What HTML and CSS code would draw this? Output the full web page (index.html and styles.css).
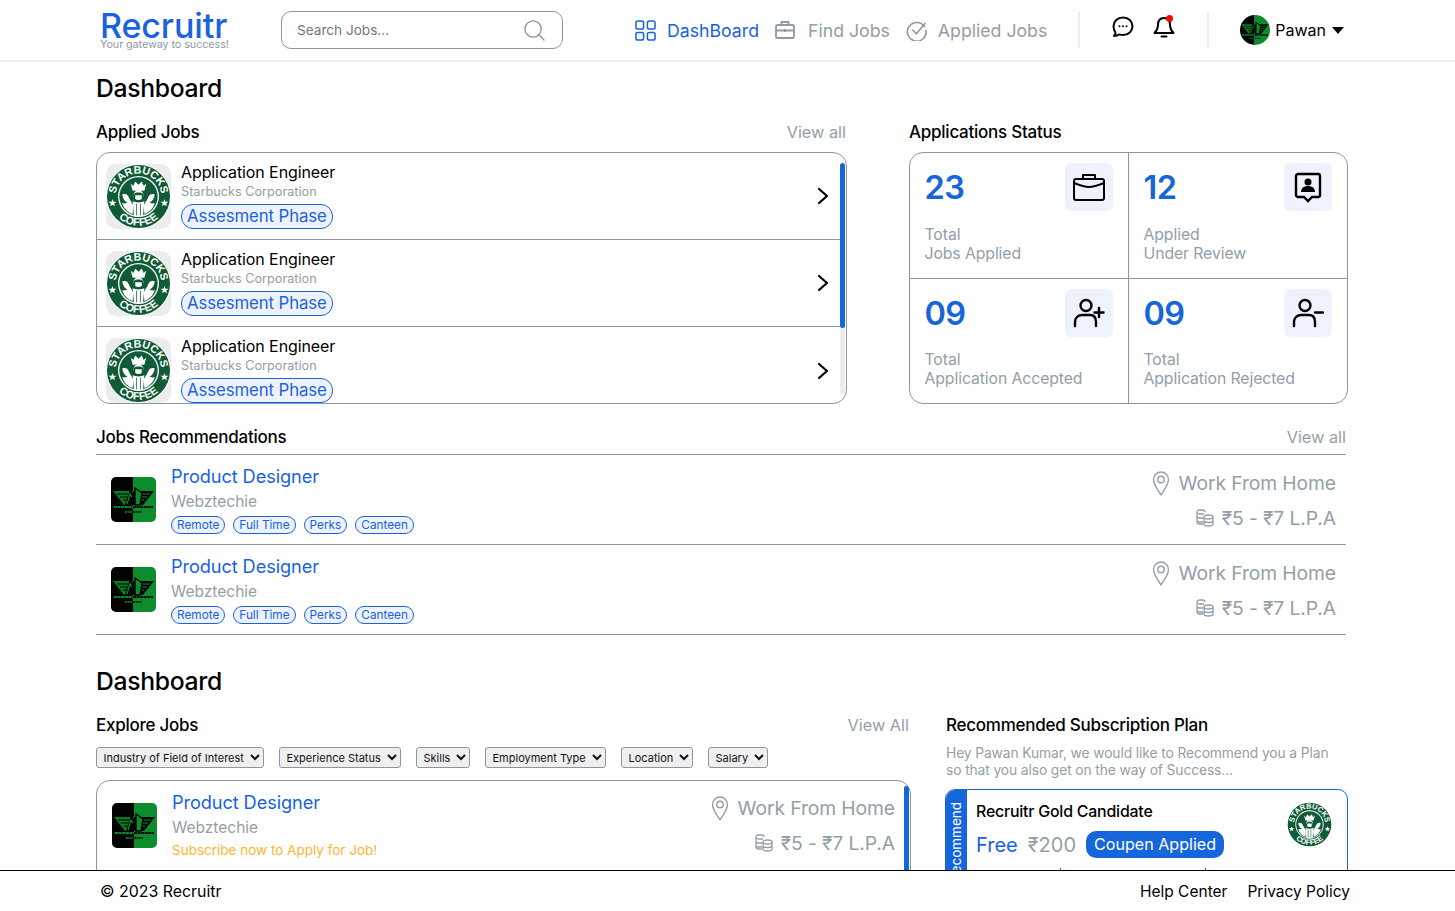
FILE: index.html
```html
<!DOCTYPE html>
<html lang="en">
<head>
<meta charset="utf-8">
<title>Recruitr Dashboard</title>
<link rel="stylesheet" href="styles.css">
</head>
<body>
<svg class="defs" aria-hidden="true">
  <defs>
    <path id="arcTop" d="M15.100 47 A35 35 0 0 1 84.900 47"/>
    <path id="arcBot" d="M18.200 81.800 A45 45 0 0 0 81.800 81.800"/>
    <symbol id="starbucks" viewBox="0 0 100 100">
      <circle cx="50" cy="50" r="50" fill="#fff"/>
      <circle cx="50" cy="50" r="48.500" fill="#0f5b36"/>
      <circle cx="50" cy="50" r="31.500" fill="#fff"/>
      <circle cx="50" cy="50" r="29.500" fill="#0f5b36"/>
      <text class="sb-text"><textPath href="#arcTop" startOffset="50%" text-anchor="middle">STARBUCKS</textPath></text>
      <text class="sb-text"><textPath href="#arcBot" startOffset="50%" text-anchor="middle">COFFEE</textPath></text>
      <polygon points="10,54 11.500,58 16,58 12.500,61 14,65 10,62.500 6,65 7.500,61 4,58 8.500,58" fill="#fff"/>
      <polygon points="90,54 91.500,58 96,58 92.500,61 94,65 90,62.500 86,65 87.500,61 84,58 88.500,58" fill="#fff"/>
      <path d="M25 47c5-2 8 0 10 4 2 5 5 8 7 13l-1 13c-8-3-14-9-16-17 3 1 6 1 8-1-4-1-7-5-8-12zM75 47c-5-2-8 0-10 4-2 5-5 8-7 13l1 13c8-3 14-9 16-17-3 1-6 1-8-1 4-1 7-5 8-12z" fill="#fff"/>
      <path d="M38 30l4 4 3-7 5 5 5-5 3 7 4-4-3 11H41z" fill="#fff"/>
      <circle cx="50" cy="48" r="7.500" fill="#fff"/>
      <path d="M43 47c0-4 14-4 14 0l2 9-4-3v-5H45v5l-4 3z" fill="#0f5b36"/>
      <path d="M41 57c5 3 13 3 18 0l-2 23H43z" fill="#fff"/>
      <path d="M47 61v18M53 61v18" stroke="#0f5b36" stroke-width="1.200"/>
    </symbol>
    <symbol id="webz" viewBox="0 0 45 45">
      <rect width="22" height="45" fill="#020402"/>
      <rect x="22" width="23" height="45" fill="#0c8c2c"/>
      <polygon points="2,14 22,14 22,28 13,28" fill="#0a7a26"/>
      <polygon points="43,14 22,14 22,28 32,28" fill="#020402"/>
      <path d="M6 17h11M9 20h9M12 23h7" stroke="#020402" stroke-width="1"/>
      <path d="M28 17h11M27 20h9M27 23h6" stroke="#0c8c2c" stroke-width="1"/>
      <path d="M14 28l5-16 3 4v12z" fill="#020402"/>
      <path d="M16 27l3-10 2 3" fill="none" stroke="#0c8c2c" stroke-width="1.200"/>
      <path d="M24 28V11l7 5-2 12z" fill="#0c8c2c" stroke="#020402" stroke-width="1.400"/>
      <path d="M3 30h19" stroke="#0c8c2c" stroke-width="2.200" stroke-dasharray="3 .6"/>
      <path d="M22 30h20" stroke="#020402" stroke-width="2.200" stroke-dasharray="3 .6"/>
      <path d="M14 35h8" stroke="#0c8c2c" stroke-width="1.400" stroke-dasharray="2 .6"/>
      <path d="M22 35h9" stroke="#020402" stroke-width="1.400" stroke-dasharray="2 .6"/>
    </symbol>
    <symbol id="chev" viewBox="0 0 12 18">
      <path d="M2 2l8 7-8 7" fill="none" stroke="#000" stroke-width="2.200" stroke-linecap="round" stroke-linejoin="round"/>
    </symbol>
    <symbol id="pin" viewBox="0 0 18 26">
      <path d="M9 25C6 20 1.500 15 1.500 9.500a7.500 7.500 0 0 1 15 0C16.500 15 12 20 9 25z" fill="none" stroke="#939ea8" stroke-width="1.400" stroke-linejoin="round"/>
      <circle cx="9" cy="9.500" r="3.200" fill="none" stroke="#939ea8" stroke-width="1.400"/>
    </symbol>
    <symbol id="coins" viewBox="0 0 18 18">
      <g fill="none" stroke="#939ea8" stroke-width="1.300">
        <path d="M8 5H3.500C2 5 1 4 1 3s1-2 2.500-2h3C8 1 9 2 9 3M1 3v9.500C1 14 2 15 3.500 15H7M1 7c0 1 1 2 2.500 2H7M1 11c0 1 1 2 2.500 2H7"/>
        <ellipse cx="12.500" cy="8" rx="4.500" ry="2"/>
        <path d="M8 8v7c0 1.200 2 2 4.500 2s4.500-.8 4.500-2V8M8 11.500c0 1.200 2 2 4.500 2s4.500-.8 4.500-2"/>
      </g>
    </symbol>
  </defs>
</svg>

<header class="topbar">
  <div class="brand">
    <span class="brand-name">Recruitr</span>
    <span class="brand-tag">Your gateway to success!</span>
  </div>
  <label class="search">
    <input class="search-input" type="text" placeholder="Search Jobs...">
    <svg class="search-icon" viewBox="0 0 22 22"><circle cx="9.500" cy="9.500" r="8.500" fill="none" stroke="#8a97a3" stroke-width="1.400"/><path d="M15.500 15.500l5.500 5.500" stroke="#8a97a3" stroke-width="1.400" stroke-linecap="round"/></svg>
  </label>
  <nav class="nav">
    <a class="nav-item active">
      <svg class="nav-icon" viewBox="0 0 22 22"><g fill="none" stroke="#1a62e0" stroke-width="1.600"><rect x="1" y="1" width="8" height="8.500" rx="2"/><rect x="13" y="1" width="8" height="8.500" rx="2"/><rect x="1" y="13" width="8" height="8" rx="2"/><rect x="13" y="13" width="8" height="8" rx="2"/></g></svg>
      DashBoard
    </a>
    <a class="nav-item">
      <svg class="nav-icon small" viewBox="0 0 20 20"><g fill="none" stroke="#8f9aa4" stroke-width="1.800"><rect x="1" y="5" width="18" height="13" rx="1.500"/><path d="M6.500 5V2h7v3M1 10.500h18M10 9v3"/></g></svg>
      Find Jobs
    </a>
    <a class="nav-item">
      <svg class="nav-icon" viewBox="0 0 22 22"><path d="M19.500 7A9.800 9.800 0 1 0 21 11" fill="none" stroke="#8f9aa4" stroke-width="1.700" stroke-linecap="round"/><path d="M7 10.500l4 4 9-11" fill="none" stroke="#8f9aa4" stroke-width="1.700" stroke-linecap="round" stroke-linejoin="round"/></svg>
      Applied Jobs
    </a>
  </nav>
  <div class="bar-tools">
    <svg class="tool" viewBox="0 0 22 22"><path d="M11 1.500c5.500 0 9.500 3.800 9.500 8.800S16.500 19 11 19c-1.300 0-2.500-.2-3.600-.6-1.500 1-3.300 1.600-5.400 1.600 1-1.200 1.500-2.300 1.500-3.400-1.300-1.600-2-3.500-2-6.300 0-5 4-8.800 9.500-8.800z" fill="none" stroke="#000" stroke-width="2" stroke-linejoin="round"/><circle cx="7.500" cy="10.300" r="1" fill="#000"/><circle cx="11" cy="10.300" r="1" fill="#000"/><circle cx="14.500" cy="10.300" r="1" fill="#000"/></svg>
    <svg class="tool" viewBox="0 0 22 24"><path d="M11 3C7 3 5 6 5 10c0 4-1.500 6-3.500 8h19C18.500 16 17 14 17 10c0-4-2-7-6-7z" fill="none" stroke="#000" stroke-width="2" stroke-linejoin="round"/><path d="M8.500 21.500h5" stroke="#000" stroke-width="2" stroke-linecap="round"/><circle cx="16.500" cy="3.500" r="3.500" fill="#f00a0a"/></svg>
  </div>
  <div class="user">
    <svg class="avatar" aria-hidden="true"><use href="#webz"/></svg>
    <span class="user-name">Pawan</span>
    <span class="caret"></span>
  </div>
</header>

<main class="page">
  <h1 class="page-title">Dashboard</h1>
  <div class="grid-top">
    <section>
      <div class="sec-head"><h2 class="sec-title">Applied Jobs</h2><a class="view-all">View all</a></div>
      <div class="card applied">
        <div class="applied-list">
          <div class="app-row">
            <div class="app-logo"><svg class="sb"><use href="#starbucks"/></svg></div>
            <div class="app-text">
              <div class="app-title">Application Engineer</div>
              <div class="app-sub">Starbucks Corporation</div>
              <span class="phase">Assesment Phase</span>
            </div>
            <svg class="chev"><use href="#chev"/></svg>
          </div>
          <div class="app-row">
            <div class="app-logo"><svg class="sb"><use href="#starbucks"/></svg></div>
            <div class="app-text">
              <div class="app-title">Application Engineer</div>
              <div class="app-sub">Starbucks Corporation</div>
              <span class="phase">Assesment Phase</span>
            </div>
            <svg class="chev"><use href="#chev"/></svg>
          </div>
          <div class="app-row last">
            <div class="app-logo"><svg class="sb"><use href="#starbucks"/></svg></div>
            <div class="app-text">
              <div class="app-title">Application Engineer</div>
              <div class="app-sub">Starbucks Corporation</div>
              <span class="phase">Assesment Phase</span>
            </div>
            <svg class="chev"><use href="#chev"/></svg>
          </div>
        </div>
        <div class="track"><div class="thumb"></div></div>
      </div>
    </section>
    <section>
      <div class="sec-head"><h2 class="sec-title">Applications Status</h2></div>
      <div class="card stats">
        <div class="stat">
          <div class="stat-top"><span class="stat-num">23</span>
            <span class="stat-icon"><svg class="stat-svg" viewBox="0 0 32 28"><g fill="none" stroke="#000" stroke-width="2" stroke-linejoin="round"><rect x="1" y="6" width="30" height="21" rx="2"/><path d="M10 6V2h12v4M1 10c5 2 10 4 15 4s10-2 15-4"/></g></svg></span></div>
          <div class="stat-label">Total<br>Jobs Applied</div>
        </div>
        <div class="stat right">
          <div class="stat-top"><span class="stat-num">12</span>
            <span class="stat-icon"><svg class="stat-svg" viewBox="0 0 32 32"><path d="M6 3h20c1 0 2 1 2 2v19c0 1-1 2-2 2h-6l-4 4-4-4H6c-1 0-2-1-2-2V5c0-1 1-2 2-2z" fill="none" stroke="#000" stroke-width="2.400"/><circle cx="16" cy="11" r="3.500" fill="#000"/><path d="M9 21c0-4 3-6 7-6s7 2 7 6z" fill="#000"/></svg></span></div>
          <div class="stat-label">Applied<br>Under Review</div>
        </div>
        <div class="stat bottom">
          <div class="stat-top"><span class="stat-num">09</span>
            <span class="stat-icon"><svg class="stat-svg" viewBox="0 0 32 30"><g fill="none" stroke="#000" stroke-width="2.400" stroke-linecap="round"><circle cx="13" cy="7.500" r="5.500"/><path d="M2 28v-4c0-4 3-7 7-7h8c4 0 6 3 6 7v4M26 10v9M21.500 14.500h9"/></g></svg></span></div>
          <div class="stat-label">Total<br>Application Accepted</div>
        </div>
        <div class="stat right bottom">
          <div class="stat-top"><span class="stat-num">09</span>
            <span class="stat-icon"><svg class="stat-svg" viewBox="0 0 32 30"><g fill="none" stroke="#000" stroke-width="2.400" stroke-linecap="round"><circle cx="13" cy="7.500" r="5.500"/><path d="M2 28v-4c0-4 3-7 7-7h8c4 0 6 3 6 7v4M23 14.500h8"/></g></svg></span></div>
          <div class="stat-label">Total<br>Application Rejected</div>
        </div>
      </div>
    </section>
  </div>

  <section class="recs">
    <div class="sec-head"><h2 class="sec-title">Jobs Recommendations</h2><a class="view-all flush">View all</a></div>
    <div class="rec-list">
      <article class="rec-row">
        <svg class="webz"><use href="#webz"/></svg>
        <div class="job-main">
          <div class="job-title">Product Designer</div>
          <div class="job-co">Webztechie</div>
          <div class="chips"><span class="chip">Remote</span><span class="chip">Full Time</span><span class="chip">Perks</span><span class="chip">Canteen</span></div>
        </div>
        <div class="job-side">
          <div class="side-line"><svg class="pin"><use href="#pin"/></svg>Work From Home</div>
          <div class="side-line"><svg class="coins"><use href="#coins"/></svg>₹5 - ₹7 L.P.A</div>
        </div>
      </article>
      <article class="rec-row">
        <svg class="webz"><use href="#webz"/></svg>
        <div class="job-main">
          <div class="job-title">Product Designer</div>
          <div class="job-co">Webztechie</div>
          <div class="chips"><span class="chip">Remote</span><span class="chip">Full Time</span><span class="chip">Perks</span><span class="chip">Canteen</span></div>
        </div>
        <div class="job-side">
          <div class="side-line"><svg class="pin"><use href="#pin"/></svg>Work From Home</div>
          <div class="side-line"><svg class="coins"><use href="#coins"/></svg>₹5 - ₹7 L.P.A</div>
        </div>
      </article>
    </div>
  </section>

  <h1 class="page-title second">Dashboard</h1>
  <div class="grid-bottom">
    <section>
      <div class="sec-head explore-head"><h2 class="sec-title">Explore Jobs</h2><a class="view-all">View All</a></div>
      <div class="filters">
        <select class="filter"><option>Industry of Field of Interest</option></select>
        <select class="filter"><option>Experience Status</option></select>
        <select class="filter"><option>Skills</option></select>
        <select class="filter"><option>Employment Type</option></select>
        <select class="filter"><option>Location</option></select>
        <select class="filter"><option>Salary</option></select>
      </div>
      <div class="card explore">
        <article class="explore-row">
          <svg class="webz"><use href="#webz"/></svg>
          <div class="job-main">
            <div class="job-title">Product Designer</div>
            <div class="job-co">Webztechie</div>
            <div class="subscribe">Subscribe now to Apply for Job!</div>
          </div>
          <div class="job-side">
            <div class="side-line"><svg class="pin"><use href="#pin"/></svg>Work From Home</div>
            <div class="side-line"><svg class="coins"><use href="#coins"/></svg>₹5 - ₹7 L.P.A</div>
          </div>
        </article>
        <div class="track explore-track"><div class="thumb full"></div></div>
      </div>
    </section>
    <section>
      <div class="sec-head"><h2 class="sec-title">Recommended Subscription Plan</h2></div>
      <p class="plan-intro">Hey Pawan Kumar, we would like to Recommend you a Plan<br>so that you also get on the way of Success...</p>
      <div class="plan">
        <div class="plan-band"><span class="plan-band-text">Recommend</span></div>
        <div class="plan-body">
          <div class="plan-top">
            <div>
              <div class="plan-name">Recruitr Gold Candidate</div>
              <div class="plan-price">
                <span class="price-free">Free</span>
                <span class="price-old">₹200</span>
                <span class="coupon">Coupen Applied</span>
              </div>
            </div>
            <svg class="plan-logo"><use href="#starbucks"/></svg>
          </div>
          <div class="plan-features">
            <div class="feature"></div>
            <div class="feature"></div>
            <div class="feature"></div>
          </div>
        </div>
      </div>
    </section>
  </div>
</main>

<footer class="footer">
  <span>© 2023 Recruitr</span>
  <div class="foot-links"><a>Help Center</a><a>Privacy Policy</a></div>
</footer>
</body>
</html>
```

FILE: styles.css
```css
* { box-sizing: border-box; }
html, body { margin: 0; height: 100%; }
body {
  height: 100vh;
  display: flex;
  flex-direction: column;
  overflow: hidden;
  background: #fff;
  color: #000;
  font-family: "Inter", "Noto Sans", sans-serif;
}
.defs { position: absolute; width: 0; height: 0; }
.sb-text { font: 700 16.500px "Liberation Sans", sans-serif; fill: #fff; }

/* header */
.topbar {
  height: 62px;
  flex: none;
  display: flex;
  align-items: center;
  border-bottom: 2px solid #ececec;
  padding: 0 100px;
}
.topbar > * { flex: none; }
.brand { width: 181px; display: flex; flex-direction: column; margin-top: 1px; }
.brand-name { font-size: 34px; line-height: 30px; font-weight: 500; color: #1a62e0; letter-spacing: -.1px; }
.brand-tag { font-size: 10.850px; line-height: 11px; margin-top: -2px; color: #8f9aa4; letter-spacing: -.1px; }
.search {
  width: 282px; height: 38px;
  display: flex; align-items: center;
  border: 1px solid #8a97a3; border-radius: 10px;
  padding: 0 17px 0 15px;
}
.search-input { flex: 1; min-width: 0; border: 0; outline: 0; padding: 0; font: 13.600px "Inter", sans-serif; color: #6d7882; }
.search-input::placeholder { color: #6d7882; opacity: 1; }
.search-icon { width: 21px; height: 21px; }
.nav { display: flex; align-items: center; margin-left: 72px; gap: 16px; }
.nav-item { display: flex; align-items: center; gap: 11px; font-size: 17.700px; color: #929da7; white-space: nowrap; }
.nav-item.active { color: #1a62e0; }
.nav-icon { width: 21px; height: 21px; }
.nav-icon.small { width: 20px; height: 20px; margin-right: 2px; }
.bar-tools {
  height: 36px; margin-left: 31px;
  display: flex; align-items: center; gap: 19px;
  padding: 0 32px;
  border-left: 2px solid #ececec; border-right: 2px solid #ececec;
}
.tool { width: 22px; height: 24px; margin-top: -6px; }
.user { display: flex; align-items: center; margin-left: 31px; }
.avatar { width: 30px; height: 30px; border-radius: 50%; }
.user-name { font-size: 16px; margin-left: 5px; }
.caret { width: 0; height: 0; margin-left: 6px; border: 6px solid transparent; border-bottom: 0; border-top: 7px solid #000; }

/* page */
.page { flex: 1; min-height: 0; overflow: hidden; padding: 11px 107px 0 96px; }
.page-title { margin: 0; font-size: 24.700px; line-height: 30px; font-weight: 500; letter-spacing: -.3px; }
.page-title.second { margin-top: 31px; }
.grid-top { display: grid; grid-template-columns: 751px 439px; column-gap: 62px; margin-top: 19px; margin-right: -1px; }
.grid-bottom { display: grid; grid-template-columns: 815px 402px; column-gap: 35px; margin-top: 19px; }
.sec-head { display: flex; justify-content: space-between; align-items: center; height: 20px; }
.sec-title { margin: 0; font-size: 17px; line-height: 20px; font-weight: 500; letter-spacing: -.25px; }
.view-all { font-size: 16.300px; color: #939ea8; padding-right: 1px; }
.view-all.flush { padding-right: 0; }
.card { border: 1px solid #8a97a3; border-radius: 14px; overflow: hidden; background: #fff; }

/* applied */
.applied { margin-top: 10px; height: 252px; display: flex; }
.applied-list { flex: 1; min-width: 0; }
.app-row { height: 87px; display: flex; padding: 9px 11px 0 9px; border-bottom: 1px solid #8a97a3; position: relative; }
.app-row.last { border-bottom: 0; }
.app-logo { width: 65px; height: 65px; flex: none; margin-top: 2px; background: #ececec; border-radius: 10px; display: flex; align-items: center; justify-content: center; }
.sb { width: 65px; height: 65px; }
.app-text { flex: 1; margin-left: 10px; display: flex; flex-direction: column; align-items: flex-start; }
.app-title { font-size: 16px; line-height: 20px; letter-spacing: -.1px; }
.app-sub { font-size: 12.700px; line-height: 16px; margin-top: 2px; color: #939ea8; }
.phase { height: 25px; margin-top: 4px; padding: 0 5px; border: 1px solid #1a62e0; border-radius: 12px; background: #eef2fd; color: #1a62e0; font-size: 16.800px; line-height: 23px; letter-spacing: -.1px; white-space: nowrap; }
.chev { width: 12px; height: 18px; align-self: center; margin-top: -9px; }
.track { width: 5px; margin: 10px 1px 8px 0; background: #ececec; border-radius: 3px; flex: none; }
.thumb { height: 165px; background: #1565db; border-radius: 3px; }
.thumb.full { height: 100%; }

/* stats */
.stats { margin-top: 10px; height: 252px; display: grid; grid-template-columns: 218px 1fr; grid-template-rows: 125px 1fr; }
.stat { padding: 10px 15px 0 14.500px; }
.stat.right { border-left: 1px solid #8a97a3; }
.stat.bottom { border-top: 1px solid #8a97a3; }
.stat-top { display: flex; justify-content: space-between; align-items: flex-start; }
.stat-num { font-size: 32.500px; line-height: 50px; font-weight: 600; color: #1565db; letter-spacing: -.6px; }
.stat-icon { width: 48px; height: 48px; border-radius: 6px; background: #eef2fd; display: flex; align-items: center; justify-content: center; }
.stat-svg { width: 32px; height: 32px; }
.stat-label { margin-top: 12px; font-size: 15.800px; line-height: 19px; color: #939ea8; letter-spacing: -.1px; }
.stat.bottom .stat-label { margin-top: 11px; }

/* recommendations */
.recs { margin: 23px 2px 0 0; }
.rec-list { margin-top: 7px; border-top: 1px solid #8a97a3; }
.rec-row { height: 90px; display: flex; align-items: center; padding: 0 10px 0 15px; border-bottom: 1px solid #8a97a3; }
.webz { width: 45px; height: 45px; flex: none; border-radius: 5px; }
.job-main { flex: 1; margin-left: 15px; display: flex; flex-direction: column; align-items: flex-start; }
.job-title { font-size: 18.200px; line-height: 22px; color: #1a62e0; letter-spacing: -.1px; }
.job-co { font-size: 15.500px; line-height: 20px; margin-top: 5px; color: #939ea8; }
.chips { display: flex; gap: 8px; margin-top: 4px; }
.chip { height: 18px; padding: 0 5px; border: 1px solid #1a62e0; border-radius: 9px; background: #eef2fd; color: #1a62e0; font-size: 11.800px; line-height: 16px; white-space: nowrap; }
.job-side { display: flex; flex-direction: column; align-items: flex-end; gap: 10px; }
.side-line { display: flex; align-items: center; font-size: 19.300px; line-height: 24px; color: #939ea8; white-space: nowrap; letter-spacing: -.1px; }
.pin { width: 18px; height: 26px; margin-right: 9px; }
.coins { width: 18px; height: 18px; margin-right: 8px; }

/* explore */
.explore-head { padding-right: 1px; }
.filters { display: flex; gap: 15px; margin-top: 12px; }
.filter { height: 21px; padding: 0 2.500px; font: 11px "Inter", sans-serif; color: #111; background-color: #efefef; border: 1px solid #8a97a3; border-radius: 3px; }
.explore { margin-top: 12px; height: 200px; display: flex; border-radius: 14px; }
.explore-row { flex: 1; display: flex; align-items: flex-start; padding: 10px 9px 0 15px; min-width: 0; }
.explore-row .webz { margin-top: 12px; }
.explore-row .job-side { padding-top: 4px; gap: 10px; }
.subscribe { font-size: 13.500px; line-height: 20px; margin-top: 2px; color: #ffb52e; }
.explore-track { margin: 5px 1px 0 0; background: #1565db; }

/* plan */
.plan-intro { margin: 10px 0 0; font-size: 13.800px; line-height: 17px; color: #939ea8; letter-spacing: -.1px; }
.plan { margin: 10px 0 0 -1px; height: 200px; display: flex; border: 1px solid #1a62e0; border-radius: 10px; overflow: hidden; }
.plan-band { width: 21px; flex: none; background: #1565db; display: flex; justify-content: center; align-items: flex-start; padding-top: 12px; }
.plan-band-text { writing-mode: vertical-rl; transform: rotate(180deg); color: #fff; font-size: 13.500px; line-height: 21px; white-space: nowrap; }
.plan-body { flex: 1; padding: 11px 15px 0 9px; min-width: 0; }
.plan-top { display: flex; justify-content: space-between; align-items: flex-start; height: 67px; }
.plan-name { font-size: 15.900px; line-height: 21px; font-weight: 500; letter-spacing: -.2px; }
.plan-price { display: flex; align-items: center; margin-top: 9px; }
.price-free { font-size: 20px; color: #1a62e0; }
.price-old { font-size: 20px; color: #939ea8; margin-left: 10px; }
.coupon { margin-left: 10px; height: 27px; padding: 0 8px; background: #1565db; color: #fff; border-radius: 10px; font-size: 16.100px; line-height: 26px; white-space: nowrap; }
.plan-logo { width: 45px; height: 45px; margin-top: 1px; flex: none; }
.plan-features { display: grid; grid-template-columns: 84px 145px 1fr; height: 60px; }
.feature + .feature { border-left: 1px solid #1a62e0; }

/* footer */
.footer {
  flex: none; height: 41px;
  display: flex; justify-content: space-between; align-items: center;
  padding: 0 105px 0 100px;
  border-top: 1px solid #000;
  background: #fff;
  font-size: 15.900px;
}
.foot-links { display: flex; gap: 20px; font-size: 15.500px; }
```
